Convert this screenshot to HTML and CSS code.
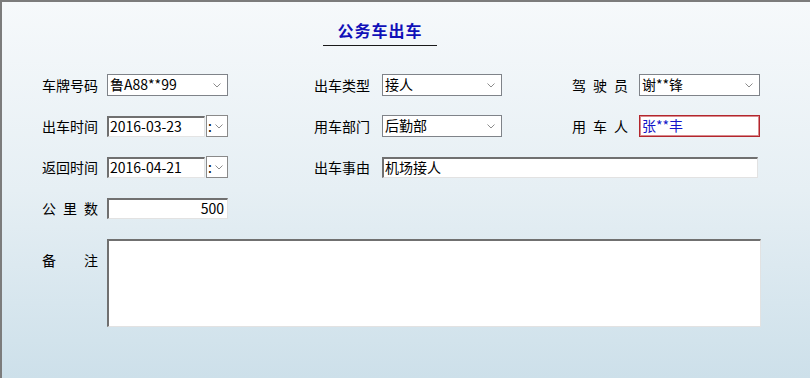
FILE: index.html
```html
<!DOCTYPE html>
<html lang="zh-CN">
<head>
  <meta charset="UTF-8">
  <title>公务车出车</title>
  <link rel="stylesheet" href="styles.css">
</head>
<body>
  <div id="frame">
    <div class="title">公务车出车</div>

    <div class="row">
      <div class="cell c1">
        <span class="label">车牌号码</span>
        <div class="select w121">鲁A88**99
          <svg class="arrow" width="8" height="5" viewBox="0 0 8 5"><polyline points="0.5,0.5 4,4 7.5,0.5" fill="none" stroke="#8c8c8c" stroke-width="1"/></svg>
        </div>
      </div>
      <div class="cell c2">
        <span class="label">出车类型</span>
        <div class="select w120">接人
          <svg class="arrow" width="8" height="5" viewBox="0 0 8 5"><polyline points="0.5,0.5 4,4 7.5,0.5" fill="none" stroke="#8c8c8c" stroke-width="1"/></svg>
        </div>
      </div>
      <div class="cell c3">
        <span class="label">驾 驶 员</span>
        <div class="select w121">谢**锋
          <svg class="arrow" width="8" height="5" viewBox="0 0 8 5"><polyline points="0.5,0.5 4,4 7.5,0.5" fill="none" stroke="#8c8c8c" stroke-width="1"/></svg>
        </div>
      </div>
    </div>

    <div class="row">
      <div class="cell c1">
        <span class="label">出车时间</span>
        <div class="date">2016-03-23</div>
        <div class="spin">:<svg width="8" height="5" viewBox="0 0 8 5"><polyline points="0.5,0.5 4,4 7.5,0.5" fill="none" stroke="#8c8c8c" stroke-width="1"/></svg></div>
      </div>
      <div class="cell c2">
        <span class="label">用车部门</span>
        <div class="select w120">后勤部
          <svg class="arrow" width="8" height="5" viewBox="0 0 8 5"><polyline points="0.5,0.5 4,4 7.5,0.5" fill="none" stroke="#8c8c8c" stroke-width="1"/></svg>
        </div>
      </div>
      <div class="cell c3">
        <span class="label">用 车 人</span>
        <div class="input active w121">张**丰</div>
      </div>
    </div>

    <div class="row">
      <div class="cell c1">
        <span class="label">返回时间</span>
        <div class="date">2016-04-21</div>
        <div class="spin">:<svg width="8" height="5" viewBox="0 0 8 5"><polyline points="0.5,0.5 4,4 7.5,0.5" fill="none" stroke="#8c8c8c" stroke-width="1"/></svg></div>
      </div>
      <div class="cell c2 wide">
        <span class="label">出车事由</span>
        <div class="input sunken w376">机场接人</div>
      </div>
    </div>

    <div class="row">
      <div class="cell c1">
        <span class="label">公 里 数</span>
        <div class="input sunken w121 num">500</div>
      </div>
    </div>

    <div class="row memo">
      <div class="cell c1 full">
        <span class="label">备 注</span>
        <div class="input sunken textarea"></div>
      </div>
    </div>
  </div>
</body>
</html>
```

FILE: styles.css
```css
* {
  margin: 0;
  padding: 0;
  box-sizing: border-box;
}
body {
  font-family: "Noto Sans CJK SC", "Liberation Sans", sans-serif;
  font-size: 14px;
  color: #000;
  background: #fff;
  overflow: hidden;
}
#frame {
  width: 810px;
  height: 378px;
  border-top: 2px solid #7c7c7c;
  border-left: 2px solid #7c7c7c;
  background: linear-gradient(to bottom, #f6f9fb 0%, #e6eff4 50%, #cde0ea 100%);
  padding-top: 18px;
}
.title {
  margin-left: 321px;
  width: 114px;
  height: 26px;
  line-height: 20px;
  text-align: center;
  font-size: 16px;
  font-weight: bold;
  letter-spacing: 1px;
  color: #1010b8;
  border-bottom: 1px solid #1a1a1a;
}
.row {
  display: grid;
  grid-template-columns: 272px 258px 1fr;
  height: 22px;
  margin-top: 19px;
  padding-left: 40px;
}
.row:nth-of-type(2) {
  margin-top: 28px;
}
.cell {
  display: flex;
  align-items: center;
}
.c1 { gap: 9px; }
.c2 { gap: 12px; }
.c3 { gap: 11px; }
.wide {
  grid-column: 2 / 4;
}
.full {
  grid-column: 1 / 4;
}
.label {
  flex-shrink: 0;
  width: 56px;
  text-align: justify;
  text-align-last: justify;
  line-height: 20px;
  white-space: nowrap;
}
.select, .input, .date {
  flex-shrink: 0;
  height: 22px;
  background: #fff;
  line-height: 19px;
  padding-left: 2px;
  white-space: nowrap;
}
.select {
  position: relative;
  border: 1px solid #7f8389;
}
.arrow {
  position: absolute;
  right: 6px;
  top: 8px;
}
.w120 { width: 120px; }
.w121 { width: 121px; }
.w376 { width: 376px; }
.date {
  width: 98px;
  height: 21px;
  border-top: 2px solid #707070;
  border-left: 2px solid #707070;
  border-right: 1px solid #e4e4e4;
  border-bottom: 1px solid #e4e4e4;
  line-height: 17px;
  padding-left: 1px;
}
.spin {
  width: 22px;
  height: 22px;
  margin-left: -8px;
  border: 1px solid #8a8a8a;
  background: #fff;
  display: flex;
  align-items: center;
  gap: 3px;
  padding-left: 1px;
  line-height: 18px;
}
.spin svg {
  margin-top: 1px;
}
.sunken {
  height: 21px;
  border-top: 2px solid #707070;
  border-left: 2px solid #707070;
  border-right: 1px solid #e2e2e2;
  border-bottom: 1px solid #e2e2e2;
  line-height: 17px;
  padding-left: 1px;
}
.num {
  text-align: right;
  padding-right: 3px;
}
.active {
  height: 22px;
  border: 1px solid #b3262d;
  box-shadow: inset 0 0 0 1px #d98a8d;
  color: #1414c8;
  line-height: 19px;
}
.memo {
  height: 88px;
  margin-top: 20px;
}
.memo .cell {
  align-items: flex-start;
}
.memo .label {
  margin-top: 11px;
}
.textarea {
  width: 654px;
  height: 88px;
}
```
